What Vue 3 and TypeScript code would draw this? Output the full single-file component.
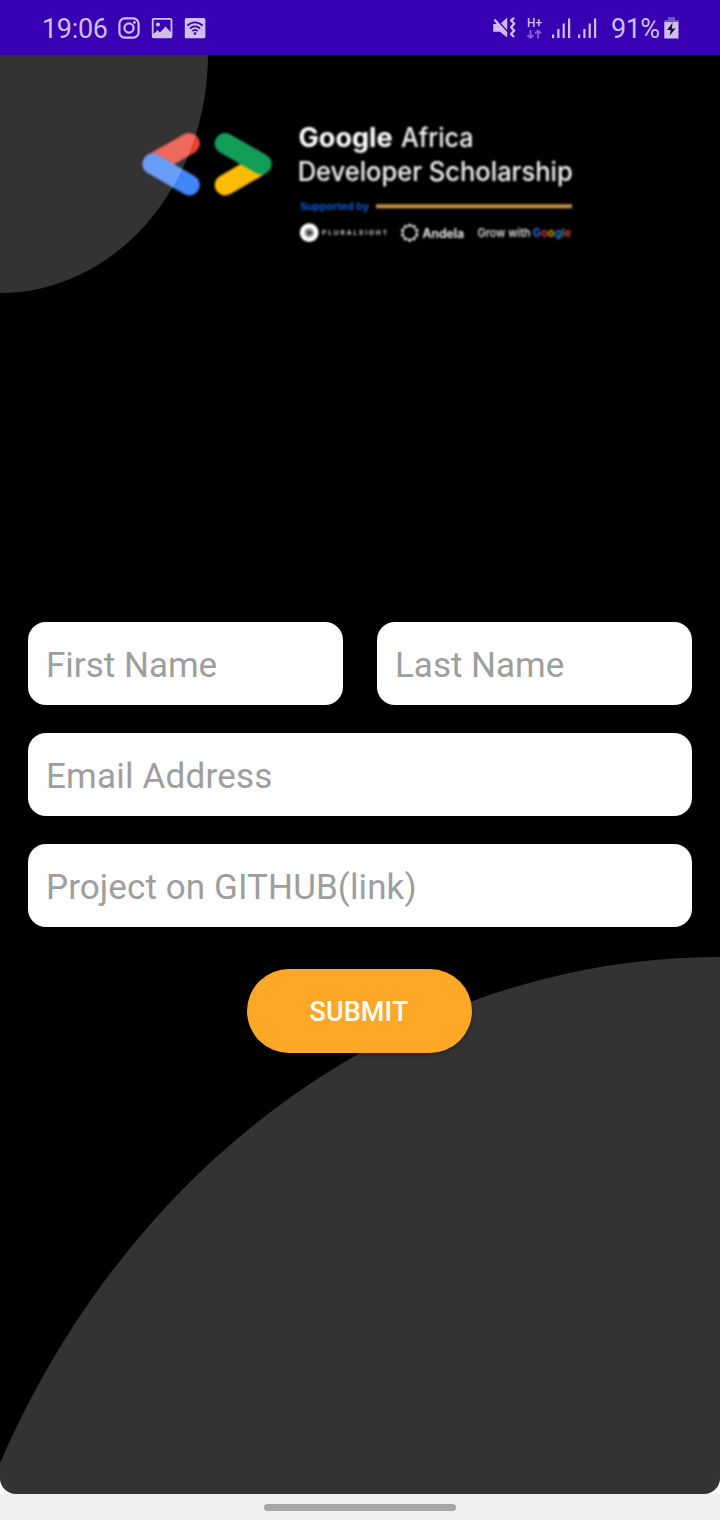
<script setup lang="ts">
import { reactive } from 'vue'

interface Field {
  key: 'first' | 'last' | 'email' | 'project'
  hint: string
  wide: boolean
}

const fields: Field[] = [
  { key: 'first', hint: 'First Name', wide: false },
  { key: 'last', hint: 'Last Name', wide: false },
  { key: 'email', hint: 'Email Address', wide: true },
  { key: 'project', hint: 'Project on GITHUB(link)', wide: true },
]

const form = reactive({ first: '', last: '', email: '', project: '' })
const dots = Array.from({ length: 10 }, (_, i) => i * 36)
</script>

<template>
  <div class="phone">
    <header class="status">
      <div class="left">
        <span class="clock">19:06</span>
        <svg class="icon" width="22" height="22" viewBox="0 0 22 22">
          <rect x="1.4" y="1.4" width="19.2" height="19.2" rx="5.4" fill="none" stroke="#cfbeee" stroke-width="2.2" />
          <circle cx="11" cy="11" r="4.6" fill="none" stroke="#cfbeee" stroke-width="2.2" />
          <circle cx="16.4" cy="5.4" r="1.4" fill="#cfbeee" />
        </svg>
        <svg class="icon" width="22" height="22" viewBox="0 0 22 22">
          <rect x="1.7" y="1.9" width="18.8" height="18.4" rx="1" fill="none" stroke="#cfbeee" stroke-width="1.8" />
          <circle cx="7" cy="7.5" r="2.1" fill="#cfbeee" />
          <path d="M2 17.5l4.500-4.500 2.500 2.500 5.500-6 6 6.500V20H2z" fill="#cfbeee" />
        </svg>
        <svg class="icon" width="22" height="22" viewBox="0 0 22 22">
          <rect x=".8" y="1" width="20.6" height="20.2" rx="1.5" fill="#cfbeee" />
          <g fill="none" stroke="#3700b3" stroke-width="1.7">
            <path d="M3.4 8.7c4.4-4.4 10.8-4.4 15.2 0" />
            <path d="M5.9 11.6c3-3 7.2-3 10.2 0" />
            <path d="M8.3 14.2c1.6-1.5 3.8-1.5 5.4 0" />
          </g>
          <circle cx="11" cy="16.6" r="1.4" fill="#3700b3" />
        </svg>
      </div>
      <div class="right">
        <svg class="signals" width="106" height="26" viewBox="0 0 106 26">
          <path d="M.2 9h3.600L.7 5.500 2.200 3.800 14.200 17v5.500L7 16.800H.2z" fill="#cfbeee" />
          <path d="M8 8.200 14.200 2.500v12.400z" fill="#cfbeee" />
          <path d="M21.200 2.800 18 5.300 21.200 8.800 18 12.300 21.200 15.600 18 19 21 22" fill="none" stroke="#cfbeee" stroke-width="2.300" stroke-linejoin="round" />
          <text x="34" y="12" textLength="15" lengthAdjust="spacingAndGlyphs" class="net">H+</text>
          <g fill="none" stroke="#8460d4" stroke-width="1.8">
            <path d="M37.500 15v8M34.500 20l3 3 3-3" />
            <path d="M45 23.500v-8M42 18.500l3-3 3 3" />
          </g>
          <g fill="#cfbeee">
            <rect x="59" y="19.5" width="2.2" height="3.5" />
            <rect x="64.300" y="14" width="2.2" height="9" />
            <rect x="69.600" y="8.500" width="2.2" height="14.5" />
            <rect x="75" y="3.500" width="2.2" height="19.5" />
            <rect x="85" y="19.500" width="2.2" height="3.5" />
            <rect x="90.300" y="14" width="2.2" height="9" />
            <rect x="95.600" y="8.500" width="2.2" height="14.5" />
            <rect x="101" y="3.500" width="2.2" height="19.5" />
          </g>
        </svg>
        <span class="level">91%</span>
        <svg class="battery" width="15" height="22" viewBox="0 0 15 22">
          <path d="M4 0h7v3h3.500v3H.5V3H4z" fill="#7650cc" />
          <rect x=".3" y="5" width="14.2" height="16.5" fill="#cfbeee" />
          <path d="M8.500 5.800 3 13h3.700L5.600 18.700 11.500 11.500H7.800z" fill="#160b35" />
        </svg>
      </div>
    </header>

    <main class="screen">
      <div class="panel">
        <svg class="brand" width="440" height="130" viewBox="137 118 440 130">
          <g fill="none" stroke-width="21" stroke-linecap="round">
            <path d="M189.300 143.500 153 164" stroke="#ea4335" />
            <path d="M153 164l36.300 21" stroke="#4285f4" />
            <path d="M225.200 185l32-18.500" stroke="#fbbc04" />
            <path d="M225.200 143.500l36 20.500" stroke="#129d58" />
          </g>
          <g class="title">
            <text x="298.500" y="146.500" class="bold" textLength="94" lengthAdjust="spacingAndGlyphs">Google</text>
            <text x="401" y="146.500" textLength="72.500" lengthAdjust="spacingAndGlyphs">Africa</text>
            <text x="297.700" y="180.500" textLength="275" lengthAdjust="spacingAndGlyphs">Developer Scholarship</text>
          </g>
          <text x="300" y="210" class="support" textLength="69" lengthAdjust="spacingAndGlyphs">Supported by</text>
          <path d="M376 206.3h196" stroke="#c8913e" stroke-width="4" />
          <circle cx="309.2" cy="232.7" r="9.4" fill="#fff" />
          <circle cx="309.2" cy="232.7" r="4.8" fill="#999" />
          <path d="M307.5 229.700l5.500 3-5.500 3z" fill="#333" />
          <text x="322" y="235.3" class="plural" textLength="65" lengthAdjust="spacing">PLURALSIGHT</text>
          <circle cx="409.7" cy="232.7" r="7" fill="none" stroke="#aaa" stroke-width="1.700" />
          <circle v-for="d in dots" :key="d" cx="409.7" cy="225" r="1.500" fill="#ddd" :transform="`rotate(${d} 409.7 232.7)`" />
          <text x="422.500" y="237.500" class="andela" textLength="41.500" lengthAdjust="spacingAndGlyphs">Andela</text>
          <text x="477.500" y="237.300" class="grow" textLength="53" lengthAdjust="spacingAndGlyphs">Grow with</text>
          <text x="532.500" y="237.300" class="google" textLength="39" lengthAdjust="spacingAndGlyphs"><tspan fill="#3470dc">G</tspan><tspan fill="#cc3d30">o</tspan><tspan fill="#cf9b14">o</tspan><tspan fill="#3470dc">g</tspan><tspan fill="#2f994f">l</tspan><tspan fill="#d84035">e</tspan></text>
        </svg>

        <form class="form" @submit.prevent>
          <input
            v-for="f in fields"
            :key="f.key"
            v-model="form[f.key]"
            :placeholder="f.hint"
            :class="['field', f.key, { wide: f.wide }]"
            type="text"
          />
          <button class="submit" type="submit">SUBMIT</button>
        </form>

        <svg class="shapes" width="720" height="1439" viewBox="0 55 720 1439">
          <ellipse cx="0" cy="54" rx="208" ry="239" />
          <ellipse cx="720" cy="1854" rx="800" ry="897" />
        </svg>
      </div>
    </main>

    <footer class="nav"><span class="handle"></span></footer>
  </div>
</template>

<style>
body {
  margin: 0;
}
</style>

<style scoped>
.phone {
  display: flex;
  flex-direction: column;
  width: 720px;
  height: 1520px;
  overflow: hidden;
  background: #fff;
  font-family: Roboto, sans-serif;
}
.status {
  display: flex;
  justify-content: space-between;
  height: 55px;
  padding: 0 41px 0 42px;
  box-sizing: border-box;
  background: #3700b3;
  color: #cfbeee;
  font-size: 27px;
}
.left,
.right {
  display: flex;
  align-items: center;
}
.clock {
  width: 76px;
  padding-top: 2px;
  letter-spacing: -0.3px;
  white-space: nowrap;
}
.icon {
  margin-right: 11px;
}
.signals {
  margin-right: 12px;
}
.net {
  font: 500 13px Roboto, sans-serif;
  fill: #cfbeee;
}
.level {
  width: 53px;
  padding-top: 2px;
  letter-spacing: -0.5px;
  white-space: nowrap;
}
.screen {
  flex: 1;
}
.panel {
  position: relative;
  z-index: 0;
  display: flex;
  flex-direction: column;
  height: 1439px;
  overflow: hidden;
  border-radius: 0 0 16px 16px;
  background: #000;
}
.brand {
  margin: 63px 0 0 137px;
  overflow: visible;
  filter: blur(0.9px);
}
.title {
  font: 500 26.5px Inter, sans-serif;
  fill: #f4f4f4;
}
.bold {
  font-weight: 700;
  fill: #fff;
}
.support {
  font: 700 10.5px Inter, sans-serif;
  fill: #1059d0;
}
.plural {
  font: 700 6.5px Inter, sans-serif;
  fill: #d5d5d5;
}
.andela {
  font: 600 12.5px Inter, sans-serif;
  fill: #fff;
}
.grow {
  font: 500 12px Inter, sans-serif;
  fill: #f5f5f5;
}
.google {
  font: 700 12px Inter, sans-serif;
}
.shapes {
  position: absolute;
  inset: 0;
  z-index: 1;
  pointer-events: none;
  fill: rgba(255, 255, 255, 0.2);
}
.form {
  position: relative;
  z-index: 2;
  display: grid;
  grid-template-columns: 315px 315px;
  gap: 28px 34px;
  margin: 374px 28px 0;
}
.field {
  box-sizing: border-box;
  width: 100%;
  height: 83px;
  padding: 3px 18px 0;
  border: 0;
  border-radius: 18px;
  outline: 0;
  background: #fff;
  color: #222;
  font: 400 35px Roboto, sans-serif;
  letter-spacing: 0.1px;
}
.field.email {
  letter-spacing: 0.2px;
}
.field.first,
.field.last {
  letter-spacing: 0;
}
.field::placeholder {
  color: #9e9e9e;
  opacity: 1;
}
.wide {
  grid-column: 1 / -1;
}
.submit {
  grid-column: 1 / -1;
  justify-self: center;
  width: 225px;
  height: 84px;
  margin: 14px 2px 0 0;
  padding: 2px 0 0;
  border: 0;
  border-radius: 42px;
  background: #ffa726;
  color: #fff;
  font: 500 27px Roboto, sans-serif;
  letter-spacing: 0.1px;
  box-shadow: 0 2px 4px rgba(0, 0, 0, 0.3);
}
.nav {
  display: flex;
  justify-content: center;
  height: 26px;
  background: #f0f0f0;
}
.handle {
  width: 192px;
  height: 7px;
  margin-top: 10px;
  border-radius: 4px;
  background: #a6a6a6;
}
</style>
